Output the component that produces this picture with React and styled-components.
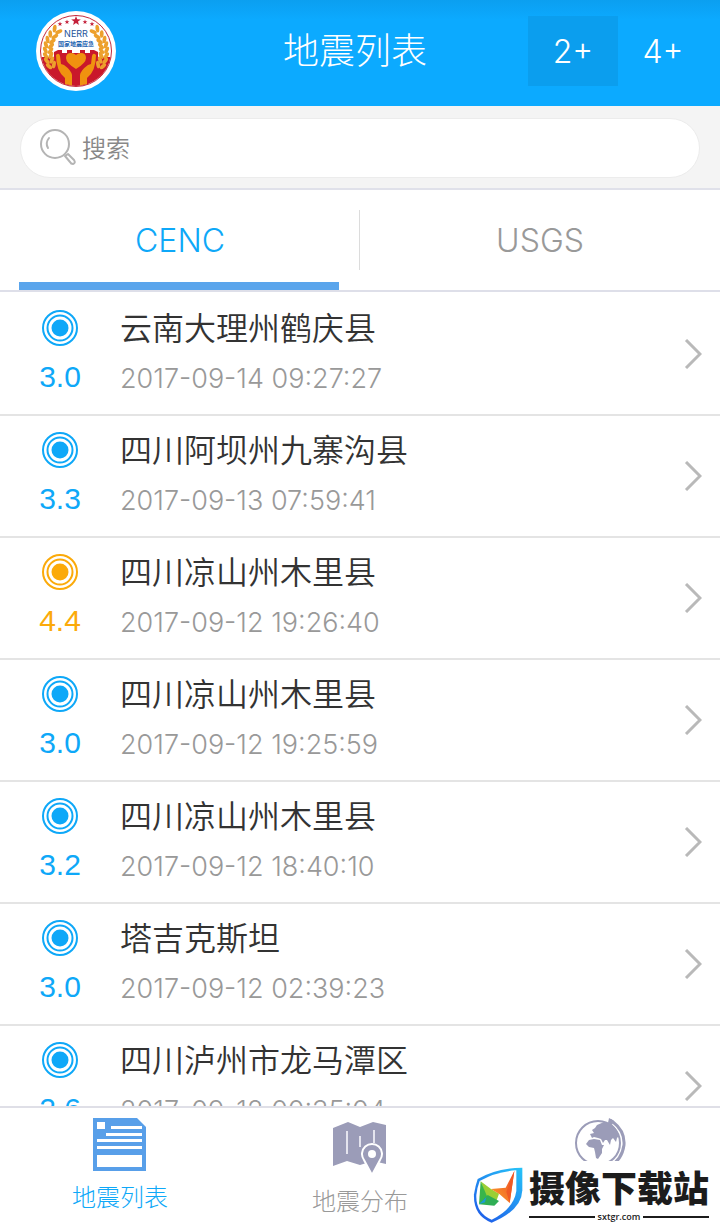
import React, { useState } from 'react'
import styled, { createGlobalStyle } from 'styled-components';

const quakes = [
    { id: 1, mag: '3.0', place: '云南大理州鹤庆县', time: '2017-09-14 09:27:27' },
    { id: 2, mag: '3.3', place: '四川阿坝州九寨沟县', time: '2017-09-13 07:59:41' },
    { id: 3, mag: '4.4', place: '四川凉山州木里县', time: '2017-09-12 19:26:40' },
    { id: 4, mag: '3.0', place: '四川凉山州木里县', time: '2017-09-12 19:25:59' },
    { id: 5, mag: '3.2', place: '四川凉山州木里县', time: '2017-09-12 18:40:10' },
    { id: 6, mag: '3.0', place: '塔吉克斯坦', time: '2017-09-12 02:39:23' },
    { id: 7, mag: '2.6', place: '四川泸州市龙马潭区', time: '2017-09-12 00:35:04' },
];

const star = (cx, cy, r) => {
    const points = [];
    for (let i = 0; i < 10; i++) {
        const a = (Math.PI / 5) * i - Math.PI / 2;
        const d = i % 2 ? r * 0.42 : r;
        points.push(`${(cx + d * Math.cos(a)).toFixed(1)},${(cy + d * Math.sin(a)).toFixed(1)}`);
    }
    return points.join(' ');
};

const Wheat = () => (
    <g fill="#eda02c">
        {[0, 1, 2, 3, 4, 5, 6, 7].map(i => {
            const y = 18 + i * 5;
            const x = 42 - Math.sqrt(900 - (y - 40) * (y - 40));
            const lean = 35 - i * 8;
            return (
                <g key={i} transform={`translate(${x} ${y}) rotate(${lean})`}>
                    <ellipse cx="-3" cy="0" rx="1.9" ry="3.8" transform="rotate(-28)" />
                    <ellipse cx="3" cy="0" rx="1.9" ry="3.8" transform="rotate(32)" />
                </g>
            );
        })}
    </g>
);

const Emblem = () => (
    <svg width="80" height="80" viewBox="0 0 80 80" role="img" aria-label="国家地震应急">
        <circle cx="40" cy="40" r="40" fill="#fff" />
        <circle cx="40" cy="40" r="35.5" fill="none" stroke="#c4273a" strokeWidth="1" />
        <path d="M5.5 46 L18 46 L18 41 L22 39 L26 39 L26 42 L31 42 L31 39 L36 39 L36 42 L44 42 L44 39 L49 39 L49 42 L54 42 L54 39 L58 39 L62 41 L62 46 L74.5 46 A35 35 0 0 1 5.5 46Z" fill="#c9182b" />
        <Wheat />
        <g transform="translate(80 0) scale(-1 1)">
            <Wheat />
        </g>
        <g fill="#f0920f">
            <path id="hand" d="M20 44 Q23 41 24 45 L25 53 L28 54 Q35 59 36 64 L36 74.5 L29 73 L29 67 Q20 60 20 44Z" />
            <use href="#hand" transform="translate(80 0) scale(-1 1)" />
            <path d="M40 58 Q30 52 30 47 Q30 42 35 42 Q38 42 40 44 Q42 42 45 42 Q50 42 50 47 Q50 52 40 58Z" />
        </g>
        <g fill="#c4203a">
            <polygon points={star(40, 10, 5)} />
            <polygon points={star(31, 11, 2.5)} />
            <polygon points={star(24, 13, 2.5)} />
            <polygon points={star(49, 11, 2.5)} />
            <polygon points={star(56, 13, 2.5)} />
        </g>
        <text x="40" y="26" textAnchor="middle" fontSize="9" fontWeight="400" fontFamily="Inter, sans-serif" fill="#25549b">NERR</text>
        <text x="40" y="35" textAnchor="middle" fontSize="6" fontWeight="700" fontFamily="Noto Sans CJK SC, sans-serif" fill="#1d62b0">国家地震应急</text>
    </svg>
);

const SearchIcon = () => (
    <svg width="38" height="38" viewBox="0 0 38 38" fill="none" stroke="#b4b4b4" aria-hidden="true">
        <circle cx="15" cy="15" r="14" strokeWidth="2" />
        <path d="M8 19 Q5 14 9 9" strokeWidth="2" strokeLinecap="round" />
        <path d="M25 27 L28 25 L34 31 Q36 34 33 35 Q31 35 30 33Z" strokeWidth="2" strokeLinejoin="round" />
    </svg>
);

const QuakeIcon = ({ color }) => (
    <svg width="38" height="38" viewBox="0 0 38 38" fill="none" stroke={color} strokeWidth="2" aria-hidden="true">
        <circle cx="19" cy="19" r="17" />
        <circle cx="19" cy="19" r="12.5" />
        <circle cx="19" cy="19" r="8.5" fill={color} stroke="none" />
    </svg>
);

const Chevron = () => (
    <svg width="18" height="30" viewBox="0 0 18 30" fill="none" stroke="#b9b9b9" strokeWidth="3" aria-hidden="true">
        <path d="M2 1 L16 15 L2 29" />
    </svg>
);

const ListIcon = () => (
    <svg width="54" height="54" viewBox="0 0 54 54" aria-hidden="true">
        <path d="M0 0 H44 L53 9 V53 H0Z" fill="#589fe9" />
        <path d="M4 4 H12 V11 H4Z M18 8 H49 V11 H18Z M13 15 H49 V18 H13Z M4 21 H49 V24 H4Z M4 28 H49 V31 H4Z M4 37 H49 V49 H4Z" fill="#fff" />
    </svg>
);

const MapIcon = () => (
    <svg width="54" height="54" viewBox="0 0 54 54" aria-hidden="true">
        <path d="M0 6 L15 0 L27 5 L40 0 L53 3 V42 L40 39 L27 43 L14 39 L0 44Z" fill="#9b9cb8" />
        <path d="M14 9 V32 M27 14 V25 M41 8 V21" stroke="#e4e4ee" strokeWidth="2" fill="none" />
        <path d="M39 53 L31 38 A10 10 0 1 1 47 38Z" fill="#9b9cb8" stroke="#fff" strokeWidth="2" />
        <circle cx="39" cy="32" r="4" fill="#fff" />
    </svg>
);

const GlobeIcon = () => (
    <svg width="52" height="54" viewBox="0 0 52 54" fill="none" aria-hidden="true">
        <circle cx="24" cy="25" r="22" stroke="#9b9cb8" strokeWidth="2" />
        <path d="M36 2 L39 4 Q51 13 50 27 Q48 42 35 49" stroke="#9b9cb8" strokeWidth="3" />
        <path d="M35 0 L40 3 L38 7 L34 5Z" fill="#9b9cb8" />
        <path d="M23 7 L30 4 L37 6 Q43 10 45 18 L43 20 L42 24 L39 20 L37 22 L36 27 L33 22 L31 22 L29 25 L27 21 L24 20 L20 19 L18 20 L16 16 L20 15 L18 12 L21 10Z" fill="#9b9cb8" />
        <path d="M15 22 L20 21 L26 22 L28 27 L30 27 L28 31 L28 35 L24 41 L22 40 L21 34 L20 30 L15 29 L12 26Z" fill="#9b9cb8" />
    </svg>
);

const ShieldIcon = () => (
    <svg width="50" height="56" viewBox="0 0 150 168" aria-hidden="true">
        <defs>
            <linearGradient id="shield" x1="1" y1="0" x2="0.3" y2="1">
                <stop offset="0" stopColor="#27c4f8" />
                <stop offset="1" stopColor="#1e62ea" />
            </linearGradient>
            <linearGradient id="flame" x1="1" y1="0" x2="0" y2="1">
                <stop offset="0" stopColor="#f04a28" />
                <stop offset="1" stopColor="#f9a128" />
            </linearGradient>
        </defs>
        <path d="M148 2 V70 Q146 130 56 167 Q0 145 3 82 Q7 56 14 36 Q70 3 148 2Z" fill="url(#shield)" />
        <path d="M130 10 V72 Q122 126 56 158 Q8 138 10 84 Q13 60 20 42 Q70 13 130 10Z" fill="#fff" />
        <path d="M23 43 L54 66 L78 80 L66 113 L40 92Z" fill="#9bcf35" />
        <path d="M23 43 L44 92 L18 112Z" fill="#39b54a" />
        <path d="M44 84 L78 102 L64 116 L18 112Z" fill="#2fae55" />
        <path d="M18 112 L40 90 L36 106Z" fill="#1c9bd8" />
        <path d="M124 12 L98 62 L54 66 L80 82 L110 108Z" fill="url(#flame)" />
        <path d="M124 12 L100 74 L110 108Z" fill="#f05a24" />
    </svg>
);

export default function App() {
    const [source, setSource] = useState('CENC');
    const [level, setLevel] = useState('2+');

    return (
        <Page>
            <GlobalStyle />
            <Header>
                <LogoSlot><Emblem /></LogoSlot>
                <Title>地震列表</Title>
                <Levels>
                    {['2+', '4+'].map(item => (
                        <LevelButton key={item} type="button" $active={item === level} onClick={() => setLevel(item)}>
                            {item}
                        </LevelButton>
                    ))}
                </Levels>
            </Header>
            <SearchBar>
                <SearchBox>
                    <SearchIcon />
                    <SearchInput type="search" placeholder="搜索" aria-label="搜索" />
                </SearchBox>
            </SearchBar>
            <Sources>
                {['CENC', 'USGS'].map(item => (
                    <SourceTab key={item} type="button" $active={item === source} onClick={() => setSource(item)}>
                        {item}
                    </SourceTab>
                ))}
            </Sources>
            <QuakeList>
                {quakes.map(quake => {
                    const color = Number(quake.mag) >= 4 ? '#fbaa0a' : '#0ea8f8';
                    return (
                        <QuakeRow key={quake.id}>
                            <QuakeLink href={`#quake-${quake.id}`}>
                                <Magnitude $color={color}>
                                    <IconLine><QuakeIcon color={color} /></IconLine>
                                    <span>{quake.mag}</span>
                                </Magnitude>
                                <Details>
                                    <Place>{quake.place}</Place>
                                    <Time>{quake.time}</Time>
                                </Details>
                                <Chevron />
                            </QuakeLink>
                        </QuakeRow>
                    );
                })}
            </QuakeList>
            <BottomNav>
                <NavLink href="#list" $active>
                    <ListIcon />
                    <span>地震列表</span>
                </NavLink>
                <NavLink href="#map">
                    <MapIcon />
                    <span>地震分布</span>
                </NavLink>
                <NavLink href="#globe" aria-label="全球">
                    <GlobeIcon />
                </NavLink>
                <SiteMark>
                    <ShieldIcon />
                    <SiteText>
                        <SiteName>摄像下载站</SiteName>
                        <SiteDomain>sxtgr.com</SiteDomain>
                    </SiteText>
                </SiteMark>
            </BottomNav>
        </Page>
    )
}

const GlobalStyle = createGlobalStyle`
    * {
        box-sizing: border-box;
    }
    body {
        margin: 0;
        background: #fff;
        font-family: Inter, "Noto Sans CJK SC", sans-serif;
        font-weight: 300;
    }
    button, input {
        font: inherit;
        border: 0;
        padding: 0;
        background: none;
    }
    a {
        color: inherit;
        text-decoration: none;
    }
    svg {
        display: block;
        flex: none;
    }
`;

const Page = styled.div`
    display: flex;
    flex-direction: column;
    height: 100vh;
`;

const Header = styled.header`
    display: grid;
    grid-template-columns: 1fr auto 1fr;
    align-items: center;
    height: 106px;
    padding: 0 12px 4px 2px;
    background: linear-gradient(#0b9ff0, #0caaff 20px);
    color: #fff;
`;

const LogoSlot = styled.div`
    padding-left: 34px;
`;

const Title = styled.h1`
    margin: 0;
    font-size: 36px;
    line-height: 52px;
    font-weight: 300;
`;

const Levels = styled.div`
    display: flex;
    justify-content: flex-end;
`;

const LevelButton = styled.button`
    width: 90px;
    height: 70px;
    font-size: 32px;
    color: #fff;
    background: ${props => (props.$active ? '#0b9eee' : 'transparent')};
`;

const SearchBar = styled.div`
    padding: 12px 20px 10px;
    background: #f4f4f4;
    border-bottom: 2px solid #e0e1ea;
`;

const SearchBox = styled.div`
    display: flex;
    align-items: center;
    gap: 4px;
    height: 60px;
    padding: 0 19px;
    background: #fff;
    border: 1px solid #ececec;
    border-radius: 30px;
`;

const SearchInput = styled.input`
    flex: 1;
    min-width: 0;
    height: 40px;
    font-size: 24px;
    font-weight: 350;
    color: #333;
    outline: none;
    &::placeholder {
        color: #888;
        opacity: 1;
    }
`;

const Sources = styled.div`
    display: flex;
    height: 102px;
    border-bottom: 2px solid #dedfe9;
`;

const SourceTab = styled.button`
    position: relative;
    flex: 1;
    font-size: 32px;
    color: ${props => (props.$active ? '#0ea8f8' : '#999')};
    &::after {
        content: '';
        display: ${props => (props.$active ? 'block' : 'none')};
        position: absolute;
        left: 19px;
        right: 21px;
        bottom: 0;
        height: 8px;
        background: #5aa5ec;
    }
    &:first-child::before {
        content: '';
        position: absolute;
        right: 0;
        top: 20px;
        bottom: 20px;
        border-left: 1px solid #dcdcdc;
    }
`;

const QuakeList = styled.ul`
    flex: 1;
    min-height: 0;
    margin: 0;
    padding: 2px 0 0;
    list-style: none;
    overflow: hidden;
`;

const QuakeRow = styled.li`
    border-bottom: 2px solid #e4e4e4;
`;

const QuakeLink = styled.a`
    display: flex;
    align-items: center;
    height: 120px;
    padding: 0 18px 0 30px;
`;

const Magnitude = styled.div`
    width: 60px;
    padding-bottom: 2px;
    text-align: center;
    font-family: "Liberation Sans", sans-serif;
    font-size: 30px;
    line-height: 50px;
    font-weight: 400;
    color: ${props => props.$color};
    span {
        display: block;
    }
`;

const IconLine = styled.div`
    display: flex;
    justify-content: center;
    align-items: center;
    height: 48px;
`;

const Details = styled.div`
    flex: 1;
    min-width: 0;
    padding-left: 30px;
    line-height: 50px;
`;

const Place = styled.div`
    font-size: 32px;
    font-weight: 350;
    color: #333;
`;

const Time = styled.div`
    font-size: 27px;
    color: #999;
`;

const BottomNav = styled.nav`
    position: relative;
    display: flex;
    height: 122px;
    border-top: 2px solid #dfdfe7;
    background: #fff;
`;

const NavLink = styled.a`
    flex: 1;
    display: flex;
    flex-direction: column;
    align-items: center;
    gap: 8px;
    padding-top: 10px;
    font-size: 24px;
    line-height: 36px;
    color: ${props => (props.$active ? '#0ea8f8' : '#999')};
    &:nth-child(2) {
        padding-top: 14px;
    }
`;

const SiteMark = styled.div`
    position: absolute;
    right: 0;
    bottom: 0;
    display: flex;
    align-items: center;
    gap: 6px;
    padding: 0 11px 0 4px;
    height: 67px;
    background: #fff;
`;

const SiteText = styled.div`
    display: flex;
    flex-direction: column;
    color: #1c1c1c;
`;

const SiteName = styled.div`
    font-size: 36px;
    line-height: 44px;
    font-weight: 900;
`;

const SiteDomain = styled.div`
    display: flex;
    align-items: center;
    gap: 3px;
    font-family: "Open Sans", sans-serif;
    font-size: 9px;
    line-height: 12px;
    font-weight: 600;
    &::before, &::after {
        content: '';
        flex: 1;
        border-top: 2px solid #1c1c1c;
    }
`;
